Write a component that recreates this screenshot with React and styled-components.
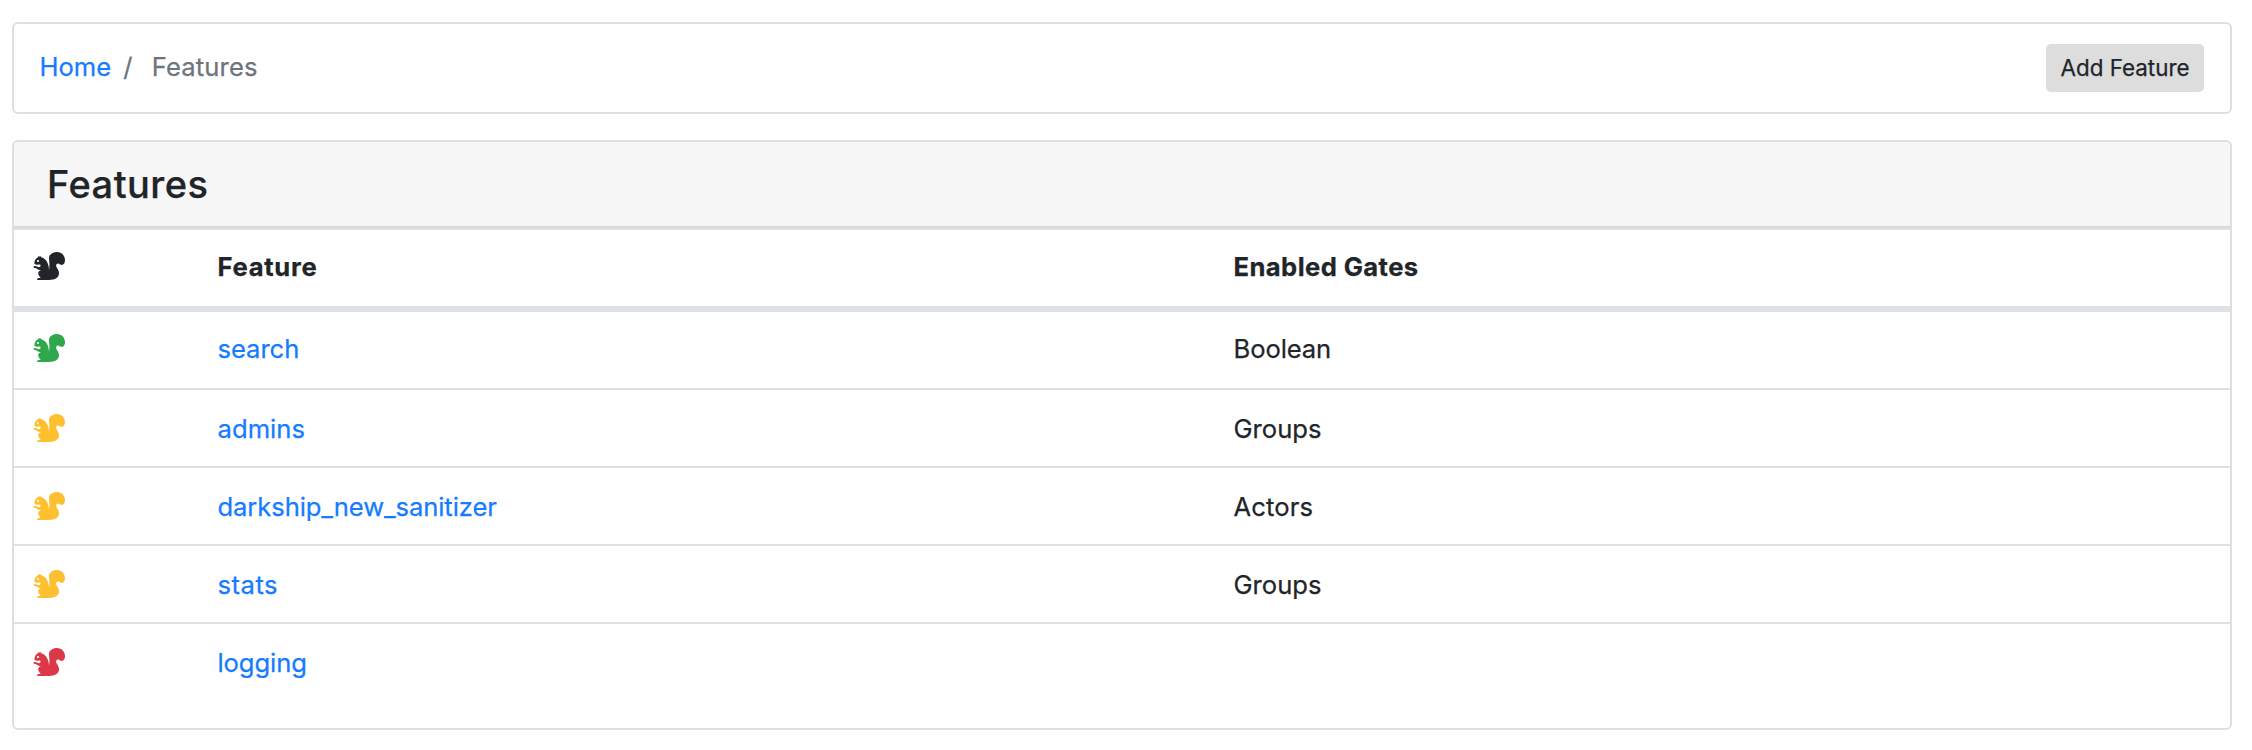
import React from "react";
import styled, { createGlobalStyle } from "styled-components";

const GlobalStyle = createGlobalStyle`
  *, *::before, *::after { box-sizing: border-box; }
  body {
    margin: 0;
    background: #fff;
    color: #212529;
    font-family: Inter, "Liberation Sans", sans-serif;
    font-size: 25.6px;
    line-height: 38px;
    -webkit-text-stroke: 0.25px currentColor;
  }
`;

const Page = styled.main`
  display: flex;
  flex-direction: column;
  gap: 26px;
  padding: 22px 20px 0 12px;
`;

const Card = styled.section`
  border: 2px solid #dfdfdf;
  border-radius: 6px;
  background: #fff;
  overflow: hidden;
`;

const TopBar = styled(Card)`
  display: flex;
  justify-content: space-between;
  align-items: flex-start;
  height: 92px;
  padding: 20px 26px 0 25px;
`;

const Breadcrumb = styled.nav`
  display: flex;
  padding: 4px 0 0 0.5px;
`;

const Label = styled.span`
  letter-spacing: ${(p) => p.$spacing || 0}px;
`;

const Link = styled.a`
  color: #157cff;
  text-decoration: none;
  letter-spacing: ${(p) => p.$spacing || 0}px;
`;

const Divider = styled.span`
  width: 28.5px;
  margin-left: 12px;
  color: #6c757d;
`;

const Current = styled(Label)`
  color: #6c757d;
`;

const Button = styled.button`
  width: 158px;
  height: 48px;
  padding: 0;
  border: 0;
  border-radius: 5px;
  background: #ddd;
  color: #212529;
  font: 400 22.4px/48px Inter, "Liberation Sans", sans-serif;
`;

const CardHeader = styled.header`
  height: 86px;
  padding: 0 33px;
  border-bottom: 2px solid #d8d9da;
  background: #f7f7f7;
`;

const Title = styled.h1`
  margin: 0;
  font-size: 38px;
  font-weight: 500;
  line-height: 84px;
  letter-spacing: 0.45px;
`;

const Row = styled.div`
  display: grid;
  grid-template-columns: 184px 1fr 1fr;
  height: 78px;
  padding-top: ${(p) => p.$top}px;
  border-top: 2px solid #dee2e6;
`;

const HeadRow = styled(Row)`
  height: 82px;
  border-bottom: 4px solid #dee2e6;
  font-weight: 700;
`;

const Cell = styled.div`
  padding-left: 19.5px;
`;

const IconCell = styled.div`
  padding-left: 19px;
`;

const Icon = styled.svg`
  display: block;
  width: 32px;
  height: 32px;
  margin-top: 2px;
  fill: ${(p) => p.$color};
`;

const Footer = styled.div`
  height: 28px;
`;

const Squirrel = ({ color }) => (
  <Icon viewBox="0 0 16 16" $color={color} aria-hidden="true">
    <path
      fillRule="evenodd"
      d="M12 1C9.79 1 8 2.31 8 3.92c0 1.94.5 3.03 0 6.08 0-4.5-2.77-6.34-4-6.34.05-.5-.48-.66-.48-.66s-.22.11-.3.34c-.27-.31-.56-.27-.56-.27l-.13.58S.7 4.29.68 6.87c.2.33 1.53.6 2.47.43.89.05.67.79.47.99C2.78 9.13 2 8 1 8S0 9 1 9s1 1 3 1c-3.09 1.2 0 4 0 4H3c-1 0-1 1-1 1h6c3 0 5-1 5-3.47 0-.85-.43-1.79-1-2.53-1.11-1.46.23-2.68 1-2 .77.68 3 1 3-2 0-2.21-1.79-4-4-4zM2.5 6c-.28 0-.5-.22-.5-.5s.22-.5.5-.5.5.22.5.5-.22.5-.5.5z"
    />
  </Icon>
);

const STATES = { on: "#2fa84b", partial: "#fec02f", off: "#dc3848" };

const FEATURES = [
  { name: "search", spacing: -0.05, gates: "Boolean", gateSpacing: -0.1, state: "on" },
  { name: "admins", spacing: 0.05, gates: "Groups", gateSpacing: 0, state: "partial" },
  { name: "darkship_new_sanitizer", spacing: -0.1, gates: "Actors", gateSpacing: 0.1, state: "partial" },
  { name: "stats", spacing: 0.5, gates: "Groups", gateSpacing: 0, state: "partial" },
  { name: "logging", spacing: -0.1, gates: "", state: "off" },
];

export default function App() {
  return (
    <>
      <GlobalStyle />
      <Page>
        <TopBar>
          <Breadcrumb>
            <Link href="#">Home</Link>
            <Divider>/</Divider>
            <Current $spacing={0.15}>Features</Current>
          </Breadcrumb>
          <Button type="button">Add Feature</Button>
        </TopBar>
        <Card>
          <CardHeader>
            <Title>Features</Title>
          </CardHeader>
          <HeadRow $top={18}>
            <IconCell><Squirrel color="#212529" /></IconCell>
            <Cell><Label $spacing={0.7}>Feature</Label></Cell>
            <Cell><Label $spacing={0.42}>Enabled Gates</Label></Cell>
          </HeadRow>
          {FEATURES.map((f, i) => (
            <Row key={f.name} $top={i === 0 ? 18 : 20}>
              <IconCell><Squirrel color={STATES[f.state]} /></IconCell>
              <Cell><Link href="#" $spacing={f.spacing}>{f.name}</Link></Cell>
              <Cell><Label $spacing={f.gateSpacing}>{f.gates}</Label></Cell>
            </Row>
          ))}
          <Footer />
        </Card>
      </Page>
    </>
  );
}
